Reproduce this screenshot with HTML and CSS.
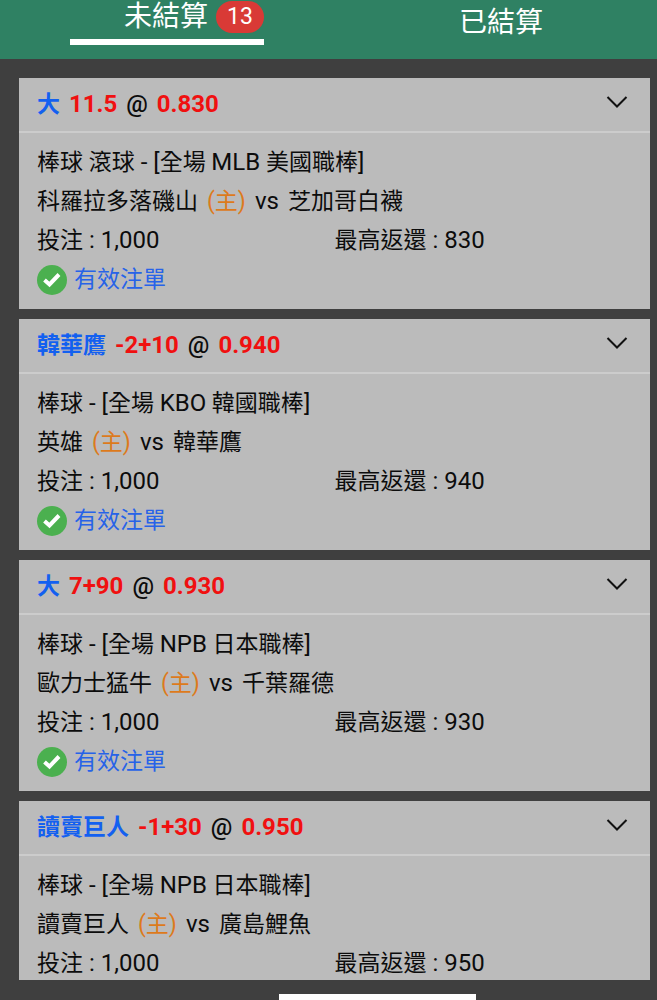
FILE: index.html
```
<!DOCTYPE html>
<html lang="zh-Hant">

<head>
    <meta charset="UTF-8">
    <meta name="viewport" content="width=device-width, initial-scale=1.0">
    <title>未結算</title>
    <link rel="stylesheet" href="styles.css">
</head>

<body>
    <nav class="tabs">
        <button type="button" class="tab active">未結算<span class="badge">13</span></button>
        <button type="button" class="tab">已結算</button>
    </nav>

    <main class="bet-list">
        <article class="bet">
            <header class="bet-header">
                <h2 class="bet-title"><span class="pick">大</span><span class="odds">11.5</span><span>@</span><span class="odds">0.830</span></h2>
                <button type="button" class="toggle" aria-label="展開">
                    <svg viewBox="0 0 22 12" width="22" height="12"><path d="M1.500 1l9.500 9.500L20.500 1" /></svg>
                </button>
            </header>
            <div class="bet-body">
                <p class="row">棒球 滾球<span class="latin"> - [</span>全場 <span class="latin">MLB</span> 美國職棒<span class="latin">]</span></p>
                <p class="row teams"><span>科羅拉多落磯山</span><span class="home">(主)</span><span class="latin">vs</span><span>芝加哥白襪</span></p>
                <p class="row amounts"><span>投注<span class="latin"> : 1,000</span></span><span>最高返還<span class="latin"> : 830</span></span></p>
                <p class="row status">
                    <svg class="check" viewBox="0 0 30 30" width="30" height="30"><circle cx="15" cy="15" r="15" /><path d="M7.500 15l5 4.500 9.500-10" /></svg>
                    <span>有效注單</span>
                </p>
            </div>
        </article>

        <article class="bet">
            <header class="bet-header">
                <h2 class="bet-title"><span class="pick">韓華鷹</span><span class="odds">-2+10</span><span>@</span><span class="odds">0.940</span></h2>
                <button type="button" class="toggle" aria-label="展開">
                    <svg viewBox="0 0 22 12" width="22" height="12"><path d="M1.500 1l9.500 9.500L20.500 1" /></svg>
                </button>
            </header>
            <div class="bet-body">
                <p class="row">棒球<span class="latin"> - [</span>全場 <span class="latin">KBO</span> 韓國職棒<span class="latin">]</span></p>
                <p class="row teams"><span>英雄</span><span class="home">(主)</span><span class="latin">vs</span><span>韓華鷹</span></p>
                <p class="row amounts"><span>投注<span class="latin"> : 1,000</span></span><span>最高返還<span class="latin"> : 940</span></span></p>
                <p class="row status">
                    <svg class="check" viewBox="0 0 30 30" width="30" height="30"><circle cx="15" cy="15" r="15" /><path d="M7.500 15l5 4.500 9.500-10" /></svg>
                    <span>有效注單</span>
                </p>
            </div>
        </article>

        <article class="bet">
            <header class="bet-header">
                <h2 class="bet-title"><span class="pick">大</span><span class="odds">7+90</span><span>@</span><span class="odds">0.930</span></h2>
                <button type="button" class="toggle" aria-label="展開">
                    <svg viewBox="0 0 22 12" width="22" height="12"><path d="M1.500 1l9.500 9.500L20.500 1" /></svg>
                </button>
            </header>
            <div class="bet-body">
                <p class="row">棒球<span class="latin"> - [</span>全場 <span class="latin">NPB</span> 日本職棒<span class="latin">]</span></p>
                <p class="row teams"><span>歐力士猛牛</span><span class="home">(主)</span><span class="latin">vs</span><span>千葉羅德</span></p>
                <p class="row amounts"><span>投注<span class="latin"> : 1,000</span></span><span>最高返還<span class="latin"> : 930</span></span></p>
                <p class="row status">
                    <svg class="check" viewBox="0 0 30 30" width="30" height="30"><circle cx="15" cy="15" r="15" /><path d="M7.500 15l5 4.500 9.500-10" /></svg>
                    <span>有效注單</span>
                </p>
            </div>
        </article>

        <article class="bet">
            <header class="bet-header">
                <h2 class="bet-title"><span class="pick">讀賣巨人</span><span class="odds">-1+30</span><span>@</span><span class="odds">0.950</span></h2>
                <button type="button" class="toggle" aria-label="展開">
                    <svg viewBox="0 0 22 12" width="22" height="12"><path d="M1.500 1l9.500 9.500L20.500 1" /></svg>
                </button>
            </header>
            <div class="bet-body">
                <p class="row">棒球<span class="latin"> - [</span>全場 <span class="latin">NPB</span> 日本職棒<span class="latin">]</span></p>
                <p class="row teams"><span>讀賣巨人</span><span class="home">(主)</span><span class="latin">vs</span><span>廣島鯉魚</span></p>
                <p class="row amounts"><span>投注<span class="latin"> : 1,000</span></span><span>最高返還<span class="latin"> : 950</span></span></p>
            </div>
        </article>
    </main>

    <footer class="bottom-bar">
        <div class="indicator"></div>
    </footer>
</body>

</html>
```

FILE: styles.css
```
* {
    box-sizing: border-box;
}

body {
    font-family: Roboto, "Noto Sans CJK TC", sans-serif;
    font-size: 23px;
    background-color: #3f3f3f;
    color: #0c0c0c;
    margin: 0;
    height: 100vh;
    display: flex;
    flex-direction: column;
}

button {
    font-family: inherit;
    background: none;
    border: none;
    padding: 0;
    cursor: pointer;
}

.latin {
    font-size: 24px;
}

/* Tabs */
.tabs {
    display: grid;
    grid-template-columns: 1fr 1fr;
    gap: 22px;
    padding-left: 11px;
    height: 59px;
    flex-shrink: 0;
    background-color: #2f8163;
}

.tab {
    color: #fff;
    font-size: 28px;
    line-height: 32px;
    height: 45px;
    justify-self: center;
}

.tab.active {
    display: flex;
    align-items: flex-start;
    justify-content: flex-end;
    gap: 8px;
    width: 194px;
    padding-top: 1px;
    border-bottom: 6px solid #fff;
}

.badge {
    background-color: #d93a36;
    border-radius: 16px;
    width: 48px;
    height: 32px;
    font-size: 23px;
    text-align: center;
}

/* Bets */
.bet-list {
    flex: 1;
    min-height: 0;
    overflow: hidden;
    display: flex;
    flex-direction: column;
    gap: 10px;
    padding: 19px 7px 0 19px;
}

.bet {
    background-color: #bbb;
    flex-shrink: 0;
}

.bet-header {
    display: flex;
    align-items: center;
    justify-content: space-between;
    height: 55px;
    padding: 0 22px 0 18px;
    border-bottom: 2px solid #ccc;
}

.bet-title {
    display: flex;
    align-items: baseline;
    gap: 9px;
    margin: 0;
    font-size: 24px;
    line-height: 39px;
    font-weight: 500;
}

.pick {
    color: #1360f0;
    font-size: 23px;
    font-weight: 700;
}

.odds {
    color: #f01010;
    font-weight: 700;
}

.toggle {
    display: flex;
    padding-bottom: 6px;
}

.toggle path {
    fill: none;
    stroke: #111;
    stroke-width: 2;
}

.bet-body {
    padding: 10px 18px;
}

.row {
    margin: 0;
    height: 39px;
    line-height: 39px;
    white-space: nowrap;
}

.teams {
    display: flex;
    align-items: baseline;
    gap: 9px;
}

.home {
    color: #dd7a1c;
}

.amounts {
    display: grid;
    grid-template-columns: 1fr 1fr;
}

.status {
    display: flex;
    align-items: center;
    gap: 7px;
    color: #2763e8;
}

.check circle {
    fill: #4bb04f;
}

.check path {
    fill: none;
    stroke: #fff;
    stroke-width: 4;
}

.bottom-bar {
    flex-shrink: 0;
    height: 20px;
    padding-top: 14px;
    background-color: #3f3f3f;
}

.indicator {
    width: 30%;
    height: 6px;
    margin-left: 42.5%;
    background-color: #fff;
}
```
